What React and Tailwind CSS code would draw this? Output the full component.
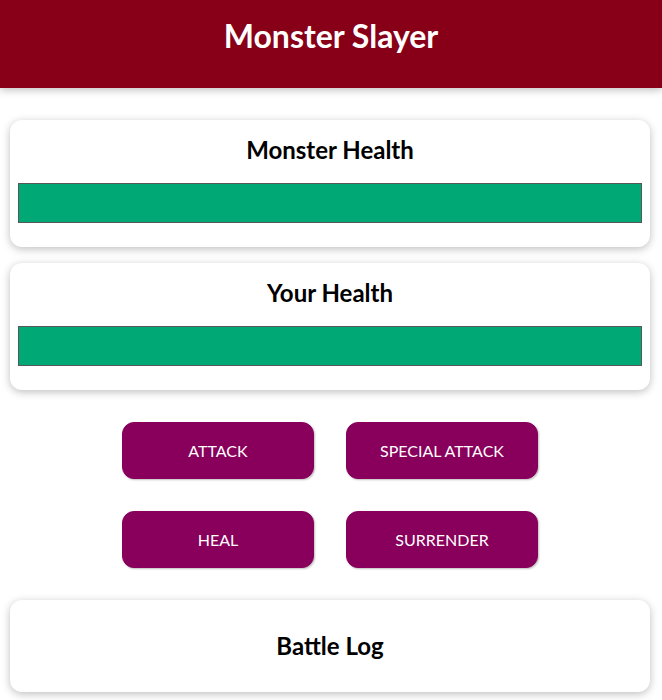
export default function App() {
  const font = { fontFamily: '"Lato", "Open Sans", sans-serif' };
  const Bar = () => (
    <div className="h-[40px] w-full border border-[#575757] bg-[#fde5e5] my-4">
      <div className="h-full w-full bg-[#00a876]" />
    </div>
  );
  const Btn = ({ children }) => (
    <button className="w-[192px] m-4 py-4 px-8 rounded-[12px] border border-[#88005b] bg-[#88005b] text-white text-[16px] leading-[23px] uppercase shadow-[1px_1px_2px_rgba(0,0,0,0.26)] whitespace-nowrap">
      {children}
    </button>
  );
  return (
    <div className="min-h-[700px] bg-white text-black font-['Lato',sans-serif]" style={font}>
      <header className="h-[88px] bg-[#880017] text-white flex justify-center pt-[16px] shadow-[0_2px_8px_rgba(0,0,0,0.26)]">
        <h1 className="text-[32px] font-bold leading-[40px]">Monster Slayer</h1>
      </header>
      <main className="w-[640px] ml-[10px] pt-[32px]">
        <section className="rounded-[12px] p-2 text-center shadow-[0_2px_8px_rgba(0,0,0,0.26)]">
          <h2 className="m-1 h-[35px] leading-[35px] text-[24px] font-bold">Monster Health</h2>
          <Bar />
        </section>
        <section className="mt-4 rounded-[12px] p-2 text-center shadow-[0_2px_8px_rgba(0,0,0,0.26)]">
          <h2 className="m-1 h-[35px] leading-[35px] text-[24px] font-bold">Your Health</h2>
          <Bar />
        </section>
        <section className="mt-4 flex flex-wrap justify-center">
          <Btn>Attack</Btn>
          <Btn>Special Attack</Btn>
          <Btn>Heal</Btn>
          <Btn>Surrender</Btn>
        </section>
        <section className="mt-4 rounded-[12px] p-2 text-center shadow-[0_2px_8px_rgba(0,0,0,0.26)]">
          <h2 className="my-[20px] h-[36px] leading-[36px] text-[24px] font-bold">Battle Log</h2>
        </section>
      </main>
    </div>
  );
}
